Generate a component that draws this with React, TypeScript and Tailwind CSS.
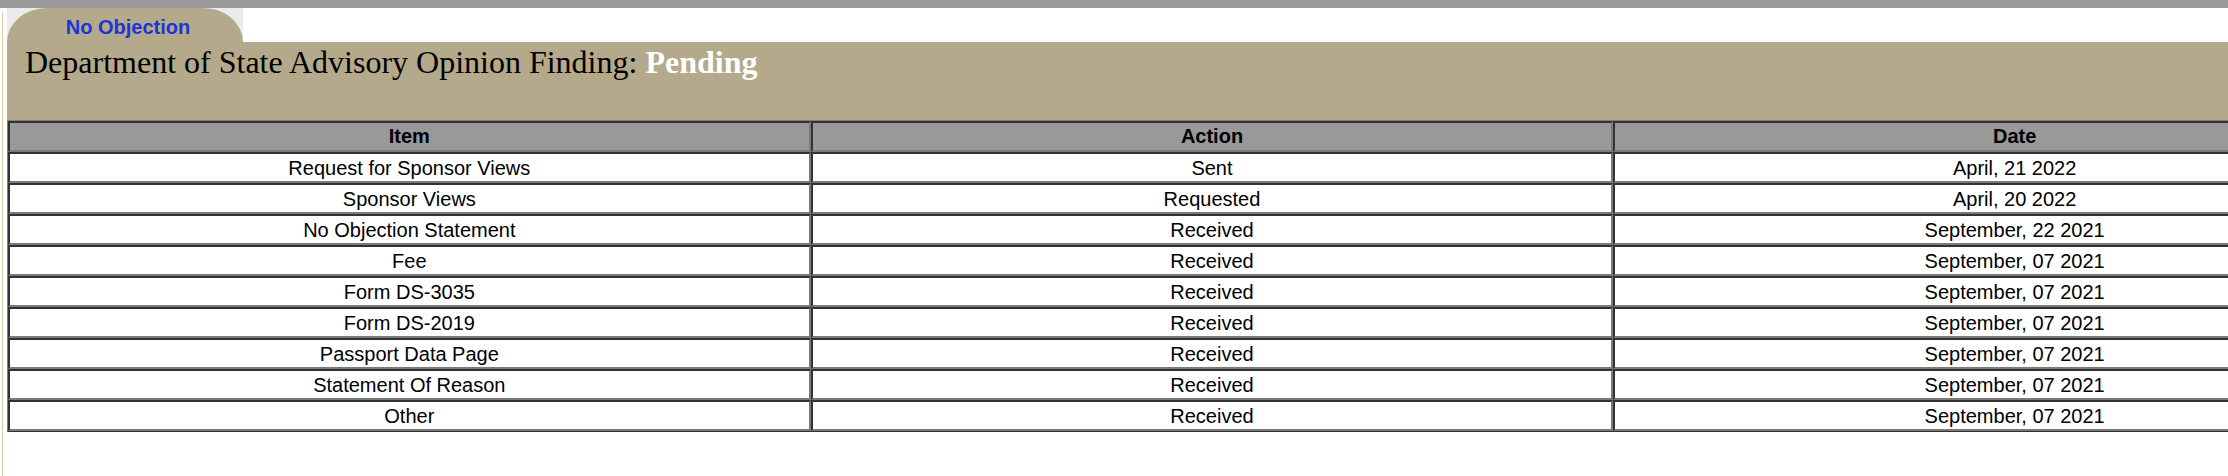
import React from "react";

const rows: [string, string, string][] = [
  ["Request for Sponsor Views", "Sent", "April, 21 2022"],
  ["Sponsor Views", "Requested", "April, 20 2022"],
  ["No Objection Statement", "Received", "September, 22 2021"],
  ["Fee", "Received", "September, 07 2021"],
  ["Form DS-3035", "Received", "September, 07 2021"],
  ["Form DS-2019", "Received", "September, 07 2021"],
  ["Passport Data Page", "Received", "September, 07 2021"],
  ["Statement Of Reason", "Received", "September, 07 2021"],
  ["Other", "Received", "September, 07 2021"],
];

const cell =
  "border-t-2 border-l-2 border-r-2 border-b-2 border-t-[#333] border-l-[#333] border-r-[#7a7a7a] border-b-[#7a7a7a] leading-[23px] text-center w-1/3";

export default function App() {
  return (
    <div className="w-[2228px] h-[476px] overflow-hidden bg-white flex flex-col">
      <div className="h-[8px] bg-[#999999] shrink-0" />
      <div className="flex flex-1 min-h-0">
        <div className="w-[7px] shrink-0 flex">
          <div className="ml-[2px] mt-[4px] w-px bg-[#d2d2a0]" />
        </div>
        <div className="flex-1 min-w-0 overflow-hidden">
          <div className="h-[34px] flex">
            <div className="w-[236px] bg-[#ebebeb]">
              <div className="h-full bg-[#b4a98a] rounded-tl-[40px_34px] rounded-tr-[40px_34px] flex items-center justify-center pt-[3px]">
                <span className="font-['Liberation_Sans',Arial,sans-serif] font-bold text-[20px] leading-[22px] text-[#1c35d4] pl-[6px]">
                  No Objection
                </span>
              </div>
            </div>
          </div>
          <div className="bg-[#b4a98a] h-[78px] pt-[2px] pl-[18px]">
            <h1 className="font-['Liberation_Serif','Times_New_Roman',serif] text-[32px] leading-[36px] text-black font-normal">
              Department of State Advisory Opinion Finding:{" "}
              <span className="font-bold text-white">Pending</span>
            </h1>
          </div>
          <table className="w-[2410px] border-separate border-spacing-0 border border-t-[#808080] border-l-[#808080] border-r-[#333] border-b-[#333] font-['Liberation_Sans',Arial,sans-serif] text-[20px] text-black table-fixed">
            <thead>
              <tr className="bg-[#999999]">
                <th className={cell + " font-bold py-[2px]"}>Item</th>
                <th className={cell + " font-bold py-[2px]"}>Action</th>
                <th className={cell + " font-bold py-[2px]"}>Date</th>
              </tr>
            </thead>
            <tbody>
              {rows.map((r) => (
                <tr key={r[0]} className="bg-white">
                  <td className={cell + " pt-[3px] pb-[1px]"}>{r[0]}</td>
                  <td className={cell + " pt-[3px] pb-[1px]"}>{r[1]}</td>
                  <td className={cell + " pt-[3px] pb-[1px]"}>{r[2]}</td>
                </tr>
              ))}
            </tbody>
          </table>
        </div>
      </div>
    </div>
  );
}
